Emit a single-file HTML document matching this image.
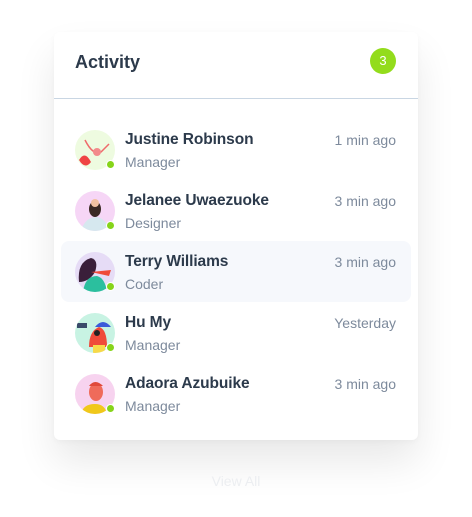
<!DOCTYPE html>
<html><head><style>
body{margin:0;width:472px;height:517px;background:#fff;font-family:"Liberation Sans",sans-serif;position:relative;overflow:hidden}
.card{position:absolute;left:54px;top:32px;width:364px;height:408px;background:#fff;border-radius:6px;box-shadow:0 22px 40px rgba(0,0,0,0.09),0 2px 6px rgba(0,0,0,0.03)}
.title{position:absolute;left:21px;top:20px;font-size:18px;font-weight:bold;color:#2c3a4b}
.badge{position:absolute;left:316px;top:16px;width:26px;height:26px;border-radius:50%;background:#93dc1c;color:#fff;font-size:13px;text-align:center;line-height:26px}
.div{position:absolute;left:0;top:66px;width:364px;height:1px;background:#c9d6e3}
.row{position:absolute;left:7px;width:350px;height:61px;border-radius:8px}
.row.hl{background:#f6f8fc}
.av{position:absolute;left:14px;top:11px;width:40px;height:40px;border-radius:50%;overflow:hidden}
.dot{position:absolute;left:45px;top:41px;width:7px;height:7px;border-radius:50%;background:#86d41a;border:1px solid #fff}
.name{position:absolute;left:64px;top:12px;font-size:15.5px;font-weight:bold;color:#2c3a4b;letter-spacing:-0.1px}
.role{position:absolute;left:64px;top:35px;font-size:14px;color:#7d8a9c}
.time{position:absolute;right:15px;top:13px;font-size:14px;color:#7d8a9c}
.va{position:absolute;left:0;width:472px;top:473px;text-align:center;font-size:14px;color:#eceef1}
</style></head><body>
<div class="card">
<div class="title">Activity</div>
<div class="badge">3</div>
<div class="div"></div>

<div class="row" style="top:87px"><div class="av" style="background:#eefbe0"><svg width="40" height="40"><path d="M4 30 Q10 20 16 32 Q10 40 4 30Z" fill="#ef4444"/><path d="M10 10 Q18 26 26 22 L34 14" stroke="#ef6b6b" stroke-width="1.5" fill="none"/><circle cx="22" cy="22" r="4" fill="#f28b8b"/></svg></div><div class="dot"></div><div class="name">Justine Robinson</div><div class="role">Manager</div><div class="time">1 min ago</div></div>

<div class="row" style="top:148px"><div class="av" style="background:#f6d6f6"><svg width="40" height="40"><path d="M6 40 Q10 26 22 26 Q32 28 34 40Z" fill="#d6e8ef"/><ellipse cx="20" cy="18" rx="6" ry="8" fill="#3a2a24"/><circle cx="20" cy="12" r="4" fill="#f2c2a2"/></svg></div><div class="dot"></div><div class="name">Jelanee Uwaezuoke</div><div class="role">Designer</div><div class="time">3 min ago</div></div>

<div class="row hl" style="top:209px"><div class="av" style="background:#e6dcf6"><svg width="40" height="40"><path d="M4 30 Q2 10 16 6 Q24 8 20 20 Q14 30 4 30Z" fill="#3a1f3a"/><path d="M8 40 Q10 24 22 24 Q30 26 32 40Z" fill="#2bbf9e"/><path d="M16 20 L36 18 L34 24 Z" fill="#ef4b3a"/></svg></div><div class="dot"></div><div class="name">Terry Williams</div><div class="role">Coder</div><div class="time">3 min ago</div></div>

<div class="row" style="top:270px"><div class="av" style="background:#c8f3e3"><svg width="40" height="40"><rect x="2" y="10" width="10" height="5" fill="#3a4a6a"/><path d="M14 34 Q14 18 24 14 Q32 16 32 34Z" fill="#ef4a3a"/><path d="M20 14 Q28 4 36 14Z" fill="#3b5bd9"/><rect x="18" y="32" width="12" height="8" fill="#f7d94a"/><circle cx="22" cy="20" r="3" fill="#222"/></svg></div><div class="dot"></div><div class="name">Hu My</div><div class="role">Manager</div><div class="time">Yesterday</div></div>

<div class="row" style="top:331px"><div class="av" style="background:#f7d3ef"><svg width="40" height="40"><path d="M6 40 Q8 30 20 30 Q30 30 32 40Z" fill="#f0c81a"/><ellipse cx="21" cy="18" rx="7" ry="9" fill="#ef6b5a"/><path d="M14 12 Q20 4 28 12Z" fill="#e04a3a"/></svg></div><div class="dot"></div><div class="name">Adaora Azubuike</div><div class="role">Manager</div><div class="time">3 min ago</div></div>
</div>
<div class="va">View All</div>
</body></html>
